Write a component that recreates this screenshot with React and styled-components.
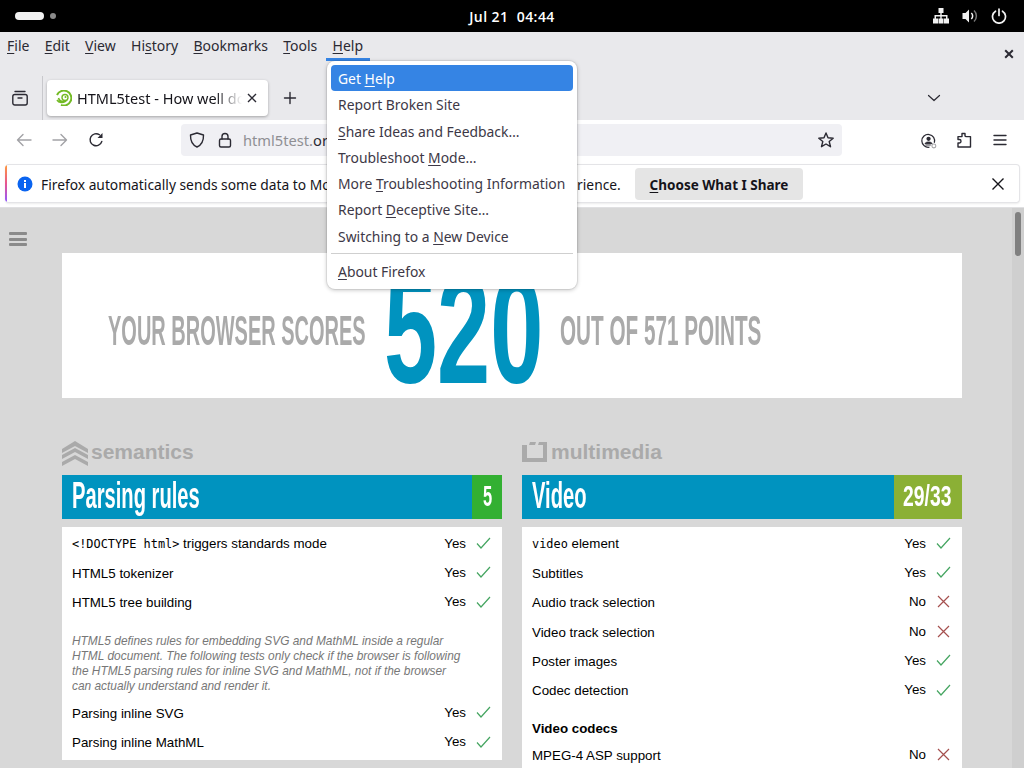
import React from "react";
import styled, { createGlobalStyle } from "styled-components";

const Global = createGlobalStyle`
  html, body { margin: 0; padding: 0; height: 100%; overflow: hidden; }
  body { font-family: "Noto Sans", sans-serif; background: #d8d8d8; }
  * { box-sizing: border-box; }
`;

const Screen = styled.div`
  position: relative;
  width: 1024px;
  height: 768px;
  overflow: hidden;
  display: flex;
  flex-direction: column;
`;

/* gnome top bar */
const TopBar = styled.div`
  height: 32px;
  flex: none;
  background: #000;
  color: #fff;
  display: grid;
  grid-template-columns: 1fr auto 1fr;
  align-items: center;
  padding: 0 15px;
`;
const Activities = styled.div`
  display: flex;
  align-items: center;
  gap: 6px;
`;
const Pill = styled.span`
  width: 29px;
  height: 8px;
  border-radius: 4px;
  background: #f2f2f2;
`;
const Dot = styled.span`
  width: 6px;
  height: 6px;
  border-radius: 50%;
  background: #8a8a8a;
`;
const Clock = styled.div`
  font-family: "Open Sans", sans-serif;
  font-size: 14px;
  font-weight: 600;
  letter-spacing: 0.45px;
  white-space: pre;
`;
const Tray = styled.div`
  display: flex;
  justify-content: flex-end;
  align-items: center;
  gap: 13px;
  margin-right: 2px;
`;

/* firefox menu bar */
const MenuBar = styled.div`
  height: 28px;
  flex: none;
  background: #e9e9ec;
  display: flex;
  align-items: center;
  padding-left: 7px;
`;
const MenuItem = styled.div`
  font-size: 14px;
  color: #2b2a33;
  margin-right: 15.3px;
  padding-bottom: 1px;
  u { text-underline-offset: 2px; text-decoration-thickness: 1px; }
  ${(p) =>
    p.$active &&
    `
    position: relative;
    &::after {
      content: "";
      position: absolute;
      left: -7px;
      right: -7px;
      bottom: -5px;
      height: 3px;
      background: #3584e4;
    }
  `}
`;
const WinClose = styled.div`
  margin-left: auto;
  width: 10px;
  height: 10px;
  margin-right: 10px;
  margin-top: 16px;
  display: flex;
`;

const TabBar = styled.div`
  height: 60px;
  flex: none;
  background: #e9e9ec;
  display: flex;
  align-items: flex-end;
`;
const ViewButton = styled.div`
  width: 43px;
  height: 44px;
  display: flex;
  align-items: center;
  justify-content: center;
  padding-right: 3px;
  border-right: 1px solid #c8c8cc;
  margin-right: 4px;
`;
const Tab = styled.div`
  width: 221px;
  height: 36px;
  margin-bottom: 4px;
  background: #fff;
  border-radius: 4px;
  box-shadow: 0 1px 3px rgba(0, 0, 0, 0.3);
  display: flex;
  align-items: center;
  padding-left: 9px;
  gap: 5px;
`;
const TabTitle = styled.div`
  width: 165px;
  white-space: nowrap;
  overflow: hidden;
  font-size: 14.5px;
  color: #15141a;
  -webkit-mask-image: linear-gradient(to right, #000 84%, transparent 100%);
  mask-image: linear-gradient(to right, #000 84%, transparent 100%);
`;
const NewTab = styled.div`
  width: 16px;
  height: 16px;
  margin: 0 0 14px 14px;
  display: flex;
`;
const TabListBtn = styled.div`
  margin-left: auto;
  width: 16px;
  height: 16px;
  margin-right: 82px;
  margin-bottom: 14px;
  display: flex;
`;

/* nav toolbar */
const NavBar = styled.div`
  height: 40px;
  flex: none;
  background: #fff;
  display: flex;
  align-items: center;
  padding-left: 16px;
`;
const NavIcon = styled.div`
  width: 16px;
  height: 16px;
  flex: none;
  display: flex;
  margin-right: ${(p) => p.$gap || 20}px;
`;
const UrlBar = styled.div`
  width: 661px;
  height: 32px;
  flex: none;
  margin-left: 76px;
  margin-right: 79px;
  background: #f0f0f4;
  border-radius: 4px;
  display: flex;
  align-items: center;
  padding: 0 8px;
`;
const UrlText = styled.div`
  font-size: 14.67px;
  color: #8f8f93;
  margin-left: 3px;
  b { font-weight: 400; color: #2b2a33; }
`;
const UrlIcon = styled.div`
  width: 16px;
  height: 16px;
  display: flex;
  margin-right: ${(p) => p.$gap || 0}px;
  ${(p) => p.$end && "margin-left: auto;"}
`;

/* notification box */
const NoticeWrap = styled.div`
  height: 48px;
  flex: none;
  padding: 4px 4px 5px 5px;
  border-bottom: 1px solid #e0e0e2;
  background: #fff;
`;
const Notice = styled.div`
  position: relative;
  height: 39px;
  background: #fff;
  border: 1px solid #e4e4e7;
  border-left: none;
  border-radius: 4px;
  box-shadow: 0 1px 2px rgba(0, 0, 0, 0.08);
  display: flex;
  align-items: center;
  overflow: hidden;
  padding-left: 12px;
  &::before {
    content: "";
    position: absolute;
    left: 0;
    top: 0;
    bottom: 0;
    width: 2px;
    background: linear-gradient(#ff9a3c, #e7548f 50%, #9059ff);
  }
`;
const NoticeText = styled.div`
  margin-left: 8px;
  padding-top: 2px;
  width: 594px;
  white-space: nowrap;
  font-size: 13.8px;
  color: #15141a;
`;
const ShareBtn = styled.div`
  width: 168px;
  height: 32px;
  border-radius: 4px;
  background: #e5e5e5;
  display: flex;
  align-items: center;
  justify-content: center;
  padding-top: 2px;
  font-size: 13.5px;
  font-weight: 700;
  color: #15141a;
  span { white-space: pre; }
  u { text-underline-offset: 2px; }
`;
const NoticeClose = styled.div`
  width: 14px;
  height: 14px;
  display: flex;
  margin-left: auto;
  margin-right: 14px;
`;

/* the dimmed page */
const Viewport = styled.div`
  flex: 1;
  min-height: 0;
  display: flex;
  background: #d8d8d8;
`;
const Page = styled.div`
  flex: 1;
  min-width: 0;
  display: flex;
  overflow: hidden;
`;
const Side = styled.div`
  width: 62px;
  flex: none;
  padding: 24px 0 0 9px;
`;
const Burger = styled.div`
  width: 18px;
  display: flex;
  flex-direction: column;
  gap: 2.5px;
  span {
    height: 3px;
    background: #8a8a8a;
    border-radius: 1px;
  }
`;
const Main = styled.div`
  width: 900px;
  flex: none;
  padding-top: 45px;
`;
const Scrollbar = styled.div`
  width: 12px;
  flex: none;
  background: #cfcfcf;
  padding: 4px 3px;
`;
const Thumb = styled.div`
  height: 44px;
  background: #808080;
  border-radius: 3px;
`;

const Gothic = styled.span`
  display: inline-block;
  font-family: "Liberation Sans", Arial, sans-serif;
  font-weight: 700;
  white-space: nowrap;
  transform-origin: left center;
  transform: scaleX(${(p) => p.$sx});
`;
const Hero = styled.div`
  height: 145px;
  background: #fff;
  display: flex;
  align-items: center;
  padding-left: 46px;
`;
const HeroLabel = styled.div`
  width: ${(p) => p.$w}px;
  flex: none;
  color: #aaa;
  font-size: 42px;
  line-height: 42px;
  margin-top: 8px;
  white-space: nowrap;
`;
const Score = styled.div`
  width: 176px;
  margin-left: 18px;
  flex: none;
  color: #0093bf;
  font-size: 154px;
  line-height: 154px;
  white-space: nowrap;
  margin-top: 2px;
`;
const Columns = styled.div`
  display: grid;
  grid-template-columns: 440px 440px;
  gap: 20px;
  margin-top: 43px;
`;
const Category = styled.div`
  height: 34px;
  display: flex;
  align-items: flex-start;
  gap: 3px;
  color: #aaa;
  font-family: "Liberation Sans", Arial, sans-serif;
  font-size: 21px;
  font-weight: 700;
  line-height: 22px;
`;
const Bar = styled.div`
  height: 44px;
  background: #0093bf;
  display: flex;
  justify-content: space-between;
  color: #fff;
`;
const BarTitle = styled.div`
  font-size: 37px;
  line-height: 38px;
  padding-left: 10px;
  white-space: nowrap;
`;
const Badge = styled.div`
  width: ${(p) => p.$w}px;
  background: ${(p) => p.$bg};
  font-size: 30px;
  line-height: 40px;
  padding-left: ${(p) => p.$pad}px;
  white-space: nowrap;
  overflow: hidden;
`;
const Card = styled.div`
  margin-top: 8px;
  background: #fff;
  padding: 2.4px 10px 3px;
  font-family: "Liberation Sans", Arial, sans-serif;
  font-size: 13.33px;
  color: #000;
`;
const Row = styled.div`
  height: 29.33px;
  display: flex;
  align-items: center;
`;
const CodeLabel = styled.span`
  margin-bottom: 2px;
  code {
    font-family: "DejaVu Sans Mono", monospace;
    font-size: 11.9px;
  }
`;
const Value = styled.div`
  margin-left: auto;
  margin-bottom: 2px;
  display: flex;
  align-items: center;
  gap: 10px;
  padding-right: 1px;
`;
const Note = styled.div`
  margin: 16.3px 24px 5px 0;
  font-size: 11.9px;
  line-height: 15px;
  font-style: italic;
  color: #777;
`;
const Sub = styled.div`
  font-weight: 700;
  line-height: 16px;
  padding: 15.3px 0 4.2px;
`;

/* help menu popup */
const Popup = styled.div`
  position: absolute;
  left: 327px;
  top: 61px;
  width: 250px;
  height: 228px;
  background: #fff;
  border-radius: 8px;
  box-shadow: 0 0 0 1px rgba(0, 0, 0, 0.06), 0 1px 4px rgba(0, 0, 0, 0.25);
  padding: 4px;
`;
const PopItem = styled.div`
  height: 26.3px;
  line-height: 27px;
  padding-left: 7px;
  border-radius: 4px;
  font-size: 13.9px;
  white-space: nowrap;
  color: ${(p) => (p.$hot ? "#fff" : "#3d3846")};
  background: ${(p) => (p.$hot ? "#3584e4" : "transparent")};
  u { text-underline-offset: 2px; text-decoration-thickness: 1px; }
`;
const PopSep = styled.div`
  height: 1px;
  background: #cfcfcf;
  margin: 3.5px 0 4.5px;
`;

const ic = { fill: "none", stroke: "#2b2a33", strokeWidth: 1.4, strokeLinecap: "round", strokeLinejoin: "round" };

const Check = () => (
  <svg width="15" height="12" viewBox="0 0 15 12">
    <path d="M1 6.5 L5 11 L14 1" fill="none" stroke="#45a561" strokeWidth="1.2" />
  </svg>
);
const Cross = () => (
  <svg width="13" height="13" viewBox="0 0 13 13" style={{ marginLeft: 1, marginRight: 1 }}>
    <path d="M1 1 L12 12 M12 1 L1 12" fill="none" stroke="#a5504e" strokeWidth="1.2" />
  </svg>
);
const Result = ({ ok }) => (
  <Value>
    {ok ? "Yes" : "No"}
    {ok ? <Check /> : <Cross />}
  </Value>
);

const left = [
  ["HTML5 tokenizer", true],
  ["HTML5 tree building", true],
];
const right = [
  ["Subtitles", true],
  ["Audio track selection", false],
  ["Video track selection", false],
  ["Poster images", true],
  ["Codec detection", true],
];

const SemanticsIcon = () => (
  <svg width="26" height="25" viewBox="0 0 26 25">
    <path d="M0 8 L13 0 L26 8 V12 L13 5 L0 12 Z M0 14 L13 7 L26 14 V18 L13 11 L0 18 Z M0 21 L13 14 L26 21 V25 L13 18 L0 25 Z" fill="#aaa" />
  </svg>
);
const MediaIcon = () => (
  <svg width="26" height="20" viewBox="0 0 26 20" style={{ marginTop: 1 }}>
    <path d="M0 3 H5 V16 H21 V3 H16 L17 0 H25 V20 H0 Z M7 3 L8 0 H14 L13 3 Z" fill="#aaa" />
  </svg>
);

export default function App() {
  return (
    <Screen>
      <Global />
      <TopBar>
        <Activities>
          <Pill />
          <Dot />
        </Activities>
        <Clock>Jul 21  04:44</Clock>
        <Tray>
          <svg width="16" height="16" viewBox="0 0 16 16" fill="#f2f2f2">
            <path d="M5.5 0 H10.5 V5 H8.7 V7 H14.5 V10.5 H16 V15.5 H11 V10.5 H13 V8.5 H8.7 V10.5 H10.5 V15.5 H5.5 V10.5 H7.3 V8.5 H3 V10.5 H5 V15.5 H0 V10.5 H1.5 V7 H7.3 V5 H5.5 Z" />
          </svg>
          <svg width="16" height="16" viewBox="0 0 16 16" fill="none">
            <path d="M7 1.5 V14.5 L3.5 11 H0.5 V5 H3.5 Z" fill="#f2f2f2" />
            <path d="M9.3 5 A4 4 0 0 1 9.3 11" stroke="#f2f2f2" strokeWidth="1.5" />
            <path d="M12 2.5 A7.5 7.5 0 0 1 12 13.5" stroke="#777" strokeWidth="1.5" />
          </svg>
          <svg width="16" height="16" viewBox="0 0 16 16" fill="none" stroke="#f2f2f2" strokeWidth="1.7" strokeLinecap="round">
            <path d="M4.5 3.2 A6.5 6.5 0 1 0 11.5 3.2" />
            <path d="M8 1 V7.5" />
          </svg>
        </Tray>
      </TopBar>

      <MenuBar>
        <MenuItem><u>F</u>ile</MenuItem>
        <MenuItem><u>E</u>dit</MenuItem>
        <MenuItem><u>V</u>iew</MenuItem>
        <MenuItem>Hi<u>s</u>tory</MenuItem>
        <MenuItem><u>B</u>ookmarks</MenuItem>
        <MenuItem><u>T</u>ools</MenuItem>
        <MenuItem $active><u>H</u>elp</MenuItem>
        <WinClose>
          <svg width="10" height="10" viewBox="0 0 10 10">
            <path d="M1.2 1.2 L8.8 8.8 M8.8 1.2 L1.2 8.8" stroke="#2b2a33" strokeWidth="2" />
          </svg>
        </WinClose>
      </MenuBar>

      <TabBar>
        <ViewButton>
          <svg width="16" height="16" viewBox="0 0 16 16" {...ic}>
            <path d="M3 1.5 H13" />
            <rect x="0.8" y="4.5" width="14.4" height="10.5" rx="2" />
            <path d="M6 8 H10" />
          </svg>
        </ViewButton>
        <Tab>
          <svg width="16" height="16" viewBox="0 0 16 16" fill="none" style={{ flex: "none" }}>
            <path d="M1 5 A7.5 7.5 0 1 1 5 15" stroke="#73ba25" strokeWidth="2" />
            <path d="M1 10 C3 13 7 13 9 11.5 C5 12 3 10 2.5 8" stroke="#73ba25" strokeWidth="1.6" />
            <circle cx="9" cy="7.5" r="3" stroke="#73ba25" strokeWidth="1.4" />
            <circle cx="9.5" cy="7" r="1" fill="#73ba25" />
          </svg>
          <TabTitle>HTML5test - How well does your browser</TabTitle>
          <svg width="10" height="10" viewBox="0 0 10 10" style={{ flex: "none" }}>
            <path d="M1 1 L9 9 M9 1 L1 9" stroke="#2b2a33" strokeWidth="1.4" />
          </svg>
        </Tab>
        <NewTab>
          <svg width="16" height="16" viewBox="0 0 16 16" {...ic}>
            <path d="M8 2.5 V13.5 M2.5 8 H13.5" />
          </svg>
        </NewTab>
        <TabListBtn>
          <svg width="16" height="16" viewBox="0 0 16 16" {...ic} strokeWidth="1.2">
            <path d="M2.5 5.5 L8 10.5 L13.5 5.5" />
          </svg>
        </TabListBtn>
      </TabBar>

      <NavBar>
        <NavIcon>
          <svg width="16" height="16" viewBox="0 0 16 16" {...ic} stroke="#a2a2a6">
            <path d="M15 8 H1.5 M7 2.5 L1.5 8 L7 13.5" />
          </svg>
        </NavIcon>
        <NavIcon>
          <svg width="16" height="16" viewBox="0 0 16 16" {...ic} stroke="#a2a2a6">
            <path d="M1 8 H14.5 M9 2.5 L14.5 8 L9 13.5" />
          </svg>
        </NavIcon>
        <NavIcon $gap={1}>
          <svg width="16" height="16" viewBox="0 0 16 16" {...ic}>
            <path d="M13.8 9.5 A6 6 0 1 1 11.5 2.8" />
            <path d="M14.5 1 V6 H9.5 Z" fill="#2b2a33" stroke="none" />
          </svg>
        </NavIcon>
        <UrlBar>
          <UrlIcon $gap={12}>
            <svg width="16" height="16" viewBox="0 0 16 16" {...ic}>
              <path d="M8 1 L14.5 3 C14.7 9 12.5 13 8 15 C3.5 13 1.3 9 1.5 3 Z" />
            </svg>
          </UrlIcon>
          <UrlIcon $gap={7}>
            <svg width="16" height="16" viewBox="0 0 16 16" {...ic}>
              <rect x="2.5" y="7" width="11" height="8" rx="1.5" />
              <path d="M5 7 V4.5 A3 3 0 0 1 11 4.5 V7" />
            </svg>
          </UrlIcon>
          <UrlText>html5test.<b>org</b></UrlText>
          <UrlIcon $end>
            <svg width="16" height="16" viewBox="0 0 16 16" {...ic}>
              <path d="M8 1 L10 5.8 L15.2 6.2 L11.2 9.5 L12.5 14.7 L8 12 L3.5 14.7 L4.8 9.5 L0.8 6.2 L6 5.8 Z" />
            </svg>
          </UrlIcon>
        </UrlBar>
        <NavIcon $gap={19}>
          <svg width="18" height="18" viewBox="0 0 18 18" fill="none">
            <path d="M15 11 A7.2 7.2 0 1 0 9.5 15.9" stroke="#2b2a33" strokeWidth="1.4" />
            <circle cx="8.5" cy="6.5" r="2.4" fill="#2b2a33" />
            <path d="M4.5 12 C5 9.5 12 9.5 12.5 12 Z M5 13.5 H11" fill="#2b2a33" stroke="#2b2a33" />
            <circle cx="14.5" cy="14.5" r="2.2" fill="#fff" stroke="#a5a5a8" strokeWidth="1.2" />
          </svg>
        </NavIcon>
        <NavIcon $gap={20}>
          <svg width="16" height="16" viewBox="0 0 16 16" {...ic}>
            <path d="M6 1.5 H9 V3.8 C9 4.6 10 4.6 10.5 4.6 H14.5 V15 H2 V11 H3.5 C5.5 11 5.5 7.5 3.5 7.5 H2 V4.6 H6 Z" />
          </svg>
        </NavIcon>
        <NavIcon>
          <svg width="16" height="16" viewBox="0 0 16 16" {...ic}>
            <path d="M2 3.5 H14 M2 8 H14 M2 12.5 H14" />
          </svg>
        </NavIcon>
      </NavBar>

      <NoticeWrap>
        <Notice>
          <svg width="16" height="16" viewBox="0 0 16 16" style={{ flex: "none" }}>
            <circle cx="8" cy="8" r="7.5" fill="#0a64f0" />
            <rect x="7" y="7" width="2" height="5" fill="#fff" />
            <rect x="7" y="4" width="2" height="2" fill="#fff" />
          </svg>
          <NoticeText>Firefox automatically sends some data to Mozilla so that we can improve your experience.</NoticeText>
          <ShareBtn><span><u>C</u>hoose What I Share</span></ShareBtn>
          <NoticeClose>
            <svg width="14" height="14" viewBox="0 0 14 14">
              <path d="M1.5 1.5 L12.5 12.5 M12.5 1.5 L1.5 12.5" stroke="#15141a" strokeWidth="1.4" />
            </svg>
          </NoticeClose>
        </Notice>
      </NoticeWrap>

      <Viewport>
        <Page>
          <Side>
            <Burger>
              <span />
              <span />
              <span />
            </Burger>
          </Side>
          <Main>
            <Hero>
              <HeroLabel $w={258}><Gothic $sx={0.476}>YOUR BROWSER SCORES</Gothic></HeroLabel>
              <Score><Gothic $sx={0.62}>520</Gothic></Score>
              <HeroLabel $w={220}><Gothic $sx={0.493}>OUT OF 571 POINTS</Gothic></HeroLabel>
            </Hero>
            <Columns>
              <div>
                <Category><SemanticsIcon />semantics</Category>
                <Bar>
                  <BarTitle><Gothic $sx={0.545}>Parsing rules</Gothic></BarTitle>
                  <Badge $w={30} $bg="#33b032" $pad={11}><Gothic $sx={0.55}>5</Gothic></Badge>
                </Bar>
                <Card>
                  <Row><CodeLabel><code>&lt;!DOCTYPE html&gt;</code> triggers standards mode</CodeLabel><Result ok /></Row>
                  {left.map(([t, ok], i) => (
                    <Row key={i}><span>{t}</span><Result ok={ok} /></Row>
                  ))}
                  <Note>
                    HTML5 defines rules for embedding SVG and MathML inside a regular HTML document. The following tests
                    only check if the browser is following the HTML5 parsing rules for inline SVG and MathML, not if the
                    browser can actually understand and render it.
                  </Note>
                  <Row><span>Parsing inline SVG</span><Result ok /></Row>
                  <Row><span>Parsing inline MathML</span><Result ok /></Row>
                </Card>
              </div>
              <div>
                <Category><MediaIcon />multimedia</Category>
                <Bar>
                  <BarTitle><Gothic $sx={0.545}>Video</Gothic></BarTitle>
                  <Badge $w={68} $bg="#8bb035" $pad={9}><Gothic $sx={0.645}>29/33</Gothic></Badge>
                </Bar>
                <Card>
                  <Row><CodeLabel><code>video</code> element</CodeLabel><Result ok /></Row>
                  {right.map(([t, ok], i) => (
                    <Row key={i}><span>{t}</span><Result ok={ok} /></Row>
                  ))}
                  <Sub>Video codecs</Sub>
                  <Row><span>MPEG-4 ASP support</span><Result /></Row>
                </Card>
              </div>
            </Columns>
          </Main>
        </Page>
        <Scrollbar><Thumb /></Scrollbar>
      </Viewport>

      <Popup>
        <PopItem $hot>Get <u>H</u>elp</PopItem>
        <PopItem>Report Broken Site</PopItem>
        <PopItem><u>S</u>hare Ideas and Feedback…</PopItem>
        <PopItem>Troubleshoot <u>M</u>ode…</PopItem>
        <PopItem>More <u>T</u>roubleshooting Information</PopItem>
        <PopItem>Report <u>D</u>eceptive Site…</PopItem>
        <PopItem>Switching to a <u>N</u>ew Device</PopItem>
        <PopSep />
        <PopItem><u>A</u>bout Firefox</PopItem>
      </Popup>
    </Screen>
  );
}
